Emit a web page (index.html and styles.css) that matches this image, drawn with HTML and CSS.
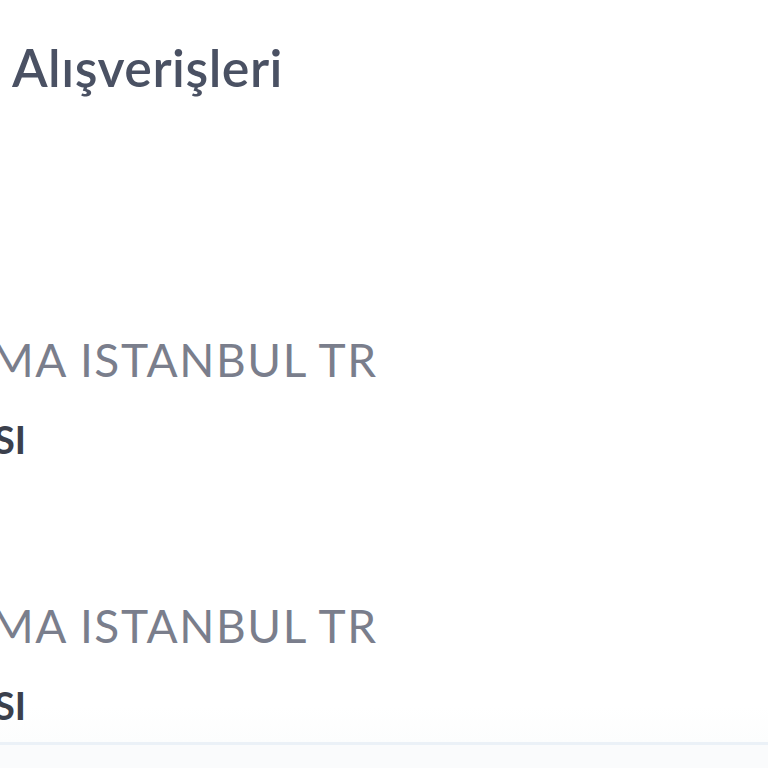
FILE: index.html
```html
<!DOCTYPE html>
<html lang="tr">
<head>
  <meta charset="UTF-8">
  <meta name="viewport" content="width=device-width, initial-scale=1">
  <title>Son Alışverişleri</title>
  <link rel="stylesheet" href="styles.css">
</head>
<body>
  <div class="screen">
    <h1 class="title"><span class="cut cut-title">Son&nbsp;</span>Alışverişleri</h1>

    <ul class="list">
      <li class="item">
        <p class="merchant"><span class="cut cut-merchant">PAZARA</span>MA ISTANBUL TR</p>
        <p class="kind"><span class="cut cut-kind">HARCAMA</span>SI</p>
      </li>
      <li class="item">
        <p class="merchant"><span class="cut cut-merchant">PAZARA</span>MA ISTANBUL TR</p>
        <p class="kind"><span class="cut cut-kind">HARCAMA</span>SI</p>
      </li>
    </ul>
  </div>
  <div class="footer"></div>
</body>
</html>
```

FILE: styles.css
```css
* {
  margin: 0;
  padding: 0;
  box-sizing: border-box;
}
html, body {
  height: 100%;
}
body {
  font-family: Lato, "Noto Sans", sans-serif;
  background: #fff;
  overflow: hidden;
  display: flex;
  flex-direction: column;
}
.screen {
  height: 742px;
  padding-top: 23px;
  background: linear-gradient(to bottom, #fff 0, #fff 705px, #fcfdfd 742px);
}
/* part of a line that is scrolled past the left edge */
.cut {
  display: inline-block;
  width: 300px;
  text-align: right;
  white-space: nowrap;
  overflow: hidden;
}
.title {
  font-size: 52px;
  font-weight: 600;
  color: #4a5163;
  line-height: 64px;
  letter-spacing: 0.5px;
  white-space: nowrap;
}
.cut-title {
  margin-left: -288px;
}
.list {
  list-style: none;
  margin-top: 230px;
  display: flex;
  flex-direction: column;
  gap: 136px;
}
.item {
  display: flex;
  flex-direction: column;
  gap: 30px;
}
.merchant {
  font-size: 46px;
  font-weight: 400;
  color: #7a7e8c;
  line-height: 48px;
  letter-spacing: 1.6px;
  white-space: nowrap;
}
.cut-merchant {
  margin-left: -309px;
}
.kind {
  font-size: 38px;
  font-weight: 700;
  color: #3b404c;
  line-height: 40px;
  white-space: nowrap;
}
.cut-kind {
  margin-left: -306px;
}
.footer {
  flex: 1;
  border-top: 3px solid #ebf1f7;
  background: #fafbfc;
}
```
